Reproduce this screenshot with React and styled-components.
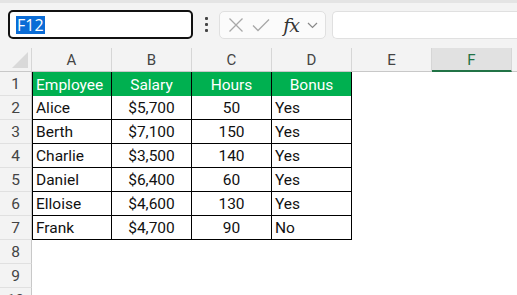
import React from "react";
import styled, { createGlobalStyle } from "styled-components";

const Global = createGlobalStyle`
  html, body { margin: 0; padding: 0; background: #ffffff; }
  body { font-family: Roboto, "Noto Sans", sans-serif; overflow: hidden; }
`;

const Page = styled.div`
  width: 517px;
  height: 295px;
  overflow: hidden;
  background: #ffffff;
`;

const TopStrip = styled.div`
  height: 3px;
  background: #e4e4e4;
`;

const Toolbar = styled.div`
  height: 45px;
  box-sizing: border-box;
  background: #f3f3f3;
  display: flex;
  align-items: flex-start;
  padding: 7px 0 0 8px;
  gap: 0;
`;

const NameBox = styled.div`
  width: 185px;
  height: 29px;
  box-sizing: border-box;
  border: 2px solid #111;
  border-radius: 5px;
  background: #fff;
  display: flex;
  align-items: center;
  padding-left: 6px;
`;

const Selected = styled.span`
  background: #0a6cd6;
  color: #fff;
  font-family: "Open Sans", "Noto Sans", sans-serif;
  font-size: 16px;
  line-height: 18px;
  padding: 0 1px;
`;

const Dots = styled.div`
  width: 26px;
  height: 29px;
  display: flex;
  flex-direction: column;
  align-items: center;
  justify-content: center;
  gap: 3px;
`;

const Dot = styled.span`
  width: 3px;
  height: 3px;
  background: #444;
  border-radius: 1px;
`;

const FxButtons = styled.div`
  width: 107px;
  height: 28px;
  margin-top: 1px;
  box-sizing: border-box;
  border: 1px solid #e0e0e0;
  border-radius: 5px;
  background: #fbfbfb;
  display: flex;
  align-items: center;
  padding-left: 6px;
`;

const IconSlot = styled.div`
  width: ${(p) => p.$w}px;
  height: 26px;
  display: flex;
  align-items: center;
  justify-content: center;
`;

const Fx = styled.span`
  font-family: "DejaVu Serif", "Liberation Serif", serif;
  font-style: italic;
  font-size: 19px;
  color: #333;
  letter-spacing: -1px;
  line-height: 1;
`;

const FormulaInput = styled.div`
  flex: 1;
  height: 28px;
  margin: 1px 0 0 6px;
  box-sizing: border-box;
  border: 1px solid #e0e0e0;
  border-right: none;
  border-radius: 5px 0 0 5px;
  background: #fff;
`;

const Sheet = styled.div`
  display: grid;
  grid-template-columns: 32px repeat(6, 80px) 1fr;
  grid-auto-rows: 24px;
`;

const Corner = styled.div`
  background: #f3f3f3;
  border-right: 1px solid #d6d6d6;
  border-bottom: 1px solid #c8c8c8;
  box-sizing: border-box;
  position: relative;
`;

const Triangle = styled.div`
  position: absolute;
  right: 3px;
  bottom: 3px;
  width: 0;
  height: 0;
  border-left: 16px solid transparent;
  border-bottom: 16px solid #d9d9d9;
`;

const ColHead = styled.div`
  box-sizing: border-box;
  background: ${(p) => (p.$active ? "#e1e1e1" : "#f3f3f3")};
  border-right: 1px solid #d6d6d6;
  border-bottom: ${(p) => (p.$active ? "2px solid #217346" : "1px solid #c8c8c8")};
  color: ${(p) => (p.$active ? "#217346" : "#444")};
  font-family: Roboto, sans-serif;
  font-size: 15px;
  display: flex;
  align-items: center;
  justify-content: center;
  padding-top: 1px;
`;

const RowHead = styled.div`
  box-sizing: border-box;
  background: #f3f3f3;
  border-right: 1px solid #c8c8c8;
  border-bottom: 1px solid #e0e0e0;
  color: #444;
  font-family: Roboto, sans-serif;
  font-size: 15.5px;
  display: flex;
  align-items: center;
  justify-content: center;
`;

const Cell = styled.div`
  box-sizing: border-box;
  font-family: Roboto, sans-serif;
  font-size: 15.5px;
  color: ${(p) => (p.$head ? "#fff" : "#111")};
  background: ${(p) => (p.$head ? "#00b050" : "#fff")};
  border-right: ${(p) => (p.$table ? "1px solid #000" : "none")};
  border-bottom: ${(p) => (p.$table && !p.$head ? "1px solid #000" : "none")};
  border-left: ${(p) => (p.$first ? "1px solid #000" : "none")};
  display: flex;
  align-items: center;
  justify-content: ${(p) => (p.$align === "center" ? "center" : "flex-start")};
  padding: 1px 3px 0 3px;
  white-space: nowrap;
`;

const data = [
  ["Alice", "$5,700", "50", "Yes"],
  ["Berth", "$7,100", "150", "Yes"],
  ["Charlie", "$3,500", "140", "Yes"],
  ["Daniel", "$6,400", "60", "Yes"],
  ["Elloise", "$4,600", "130", "Yes"],
  ["Frank", "$4,700", "90", "No"],
];

const headers = ["Employee", "Salary", "Hours", "Bonus"];
const cols = ["A", "B", "C", "D", "E", "F", ""];

export default function App() {
  const rows = [];
  // header row 1
  rows.push(
    <React.Fragment key="r1">
      <RowHead>1</RowHead>
      {headers.map((h, i) => (
        <Cell key={h} $head $table $first={i === 0} $align={i === 0 ? "left" : "center"}>
          {h}
        </Cell>
      ))}
      <Cell />
      <Cell />
      <Cell />
    </React.Fragment>
  );
  data.forEach((r, ri) => {
    rows.push(
      <React.Fragment key={"r" + ri}>
        <RowHead>{ri + 2}</RowHead>
        <Cell $table $first>{r[0]}</Cell>
        <Cell $table $align="center">{r[1]}</Cell>
        <Cell $table $align="center">{r[2]}</Cell>
        <Cell $table>{r[3]}</Cell>
        <Cell />
        <Cell />
        <Cell />
      </React.Fragment>
    );
  });
  [8, 9, 10].forEach((n) => {
    rows.push(
      <React.Fragment key={"e" + n}>
        <RowHead>{n}</RowHead>
        <Cell />
        <Cell />
        <Cell />
        <Cell />
        <Cell />
        <Cell />
        <Cell />
      </React.Fragment>
    );
  });

  return (
    <Page>
      <Global />
      <TopStrip />
      <Toolbar>
        <NameBox>
          <Selected>F12</Selected>
        </NameBox>
        <Dots>
          <Dot />
          <Dot />
          <Dot />
        </Dots>
        <FxButtons>
          <IconSlot $w={20}>
            <svg width="16" height="16" viewBox="0 0 16 16">
              <path d="M1.5 1.5 L14.5 14.5 M14.5 1.5 L1.5 14.5" stroke="#a8a8a8" strokeWidth="1.3" fill="none" />
            </svg>
          </IconSlot>
          <IconSlot $w={30}>
            <svg width="18" height="14" viewBox="0 0 18 14">
              <path d="M1 7.5 L6 12.5 L17 1.5" stroke="#a8a8a8" strokeWidth="1.3" fill="none" />
            </svg>
          </IconSlot>
          <IconSlot $w={30}>
            <Fx>fx</Fx>
          </IconSlot>
          <IconSlot $w={12}>
            <svg width="11" height="7" viewBox="0 0 11 7">
              <path d="M1 1 L5.5 5.5 L10 1" stroke="#888" strokeWidth="1.2" fill="none" />
            </svg>
          </IconSlot>
        </FxButtons>
        <FormulaInput />
      </Toolbar>
      <Sheet>
        <Corner>
          <Triangle />
        </Corner>
        {cols.map((c, i) => (
          <ColHead key={i} $active={c === "F"}>
            {c}
          </ColHead>
        ))}
        {rows}
      </Sheet>
    </Page>
  );
}
